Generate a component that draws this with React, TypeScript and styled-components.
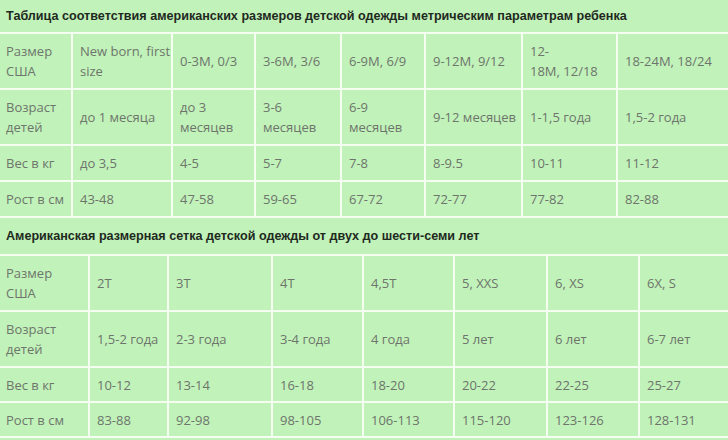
import React from "react";
import styled, { createGlobalStyle } from "styled-components";

const Global = createGlobalStyle`
  html, body { margin: 0; padding: 0; background: #c1f2b9; }
  body { width: 728px; height: 440px; overflow: hidden; }
`;

const Page = styled.div`
  width: 728px;
  display: flex;
  flex-direction: column;
`;

const Grid = styled.div<{ $cols: string }>`
  display: grid;
  grid-template-columns: ${(p) => p.$cols};
  gap: 2px;
  padding-bottom: 2px;
  background: #f4fff2;
`;

const Title = styled.div<{ $h: number }>`
  grid-column: 1 / -1;
  height: ${(p) => p.$h}px;
  display: flex;
  align-items: center;
  padding-left: 6px;
  background: #c1f2b9;
  font-family: "Liberation Sans", Arial, sans-serif;
  font-weight: bold;
  font-size: 12.6px;
  color: #1f2a1f;
`;

const Cell = styled.div<{ $h: number; $first?: boolean }>`
  height: ${(p) => p.$h}px;
  box-sizing: border-box;
  display: flex;
  flex-direction: column;
  justify-content: center;
  padding-left: ${(p) => (p.$first ? 6 : 7)}px;
  background: #c1f2b9;
  font-family: "Open Sans", "Noto Sans", sans-serif;
  font-size: 13px;
  line-height: 20px;
  color: #6e756d;
  white-space: nowrap;
  overflow: hidden;
`;

type Row = { h: number; cells: string[] };

const table1: Row[] = [
  {
    h: 54,
    cells: [
      "Размер\nСША",
      "New born, first\nsize",
      "0-3M, 0/3",
      "3-6M, 3/6",
      "6-9M, 6/9",
      "9-12M, 9/12",
      "12-\n18M, 12/18",
      "18-24M, 18/24",
    ],
  },
  {
    h: 54,
    cells: [
      "Возраст\nдетей",
      "до 1 месяца",
      "до 3\nмесяцев",
      "3-6\nмесяцев",
      "6-9\nмесяцев",
      "9-12 месяцев",
      "1-1,5 года",
      "1,5-2 года",
    ],
  },
  { h: 34, cells: ["Вес в кг", "до 3,5", "4-5", "5-7", "7-8", "8-9.5", "10-11", "11-12"] },
  { h: 34, cells: ["Рост в см", "43-48", "47-58", "59-65", "67-72", "72-77", "77-82", "82-88"] },
];

const table2: Row[] = [
  { h: 54, cells: ["Размер\nСША", "2T", "3T", "4T", "4,5T", "5, XXS", "6, XS", "6X, S"] },
  {
    h: 54,
    cells: ["Возраст\nдетей", "1,5-2 года", "2-3 года", "3-4 года", "4 года", "5 лет", "6 лет", "6-7 лет"],
  },
  { h: 33, cells: ["Вес в кг", "10-12", "13-14", "16-18", "18-20", "20-22", "22-25", "25-27"] },
  { h: 33, cells: ["Рост в см", "83-88", "92-98", "98-105", "106-113", "115-120", "123-126", "128-131"] },
];

function SizeTable({
  title,
  titleH,
  cols,
  rows,
}: {
  title: string;
  titleH: number;
  cols: string;
  rows: Row[];
}) {
  return (
    <Grid $cols={cols}>
      <Title $h={titleH}>{title}</Title>
      {rows.map((r, ri) =>
        r.cells.map((c, ci) => (
          <Cell key={`${ri}-${ci}`} $h={r.h} $first={ci === 0}>
            {c.split("\n").map((line, li) => (
              <span key={li}>{line}</span>
            ))}
          </Cell>
        ))
      )}
    </Grid>
  );
}

export default function App() {
  return (
    <Page>
      <Global />
      <SizeTable
        title="Таблица соответствия американских размеров детской одежды метрическим параметрам ребенка"
        titleH={32}
        cols="71px 98px 81px 84px 82px 95px 93px 110px"
        rows={table1}
      />
      <SizeTable
        title="Американская размерная сетка детской одежды от двух до шести-семи лет"
        titleH={36}
        cols="88px 77px 102px 89px 89px 91px 90px 88px"
        rows={table2}
      />
    </Page>
  );
}
